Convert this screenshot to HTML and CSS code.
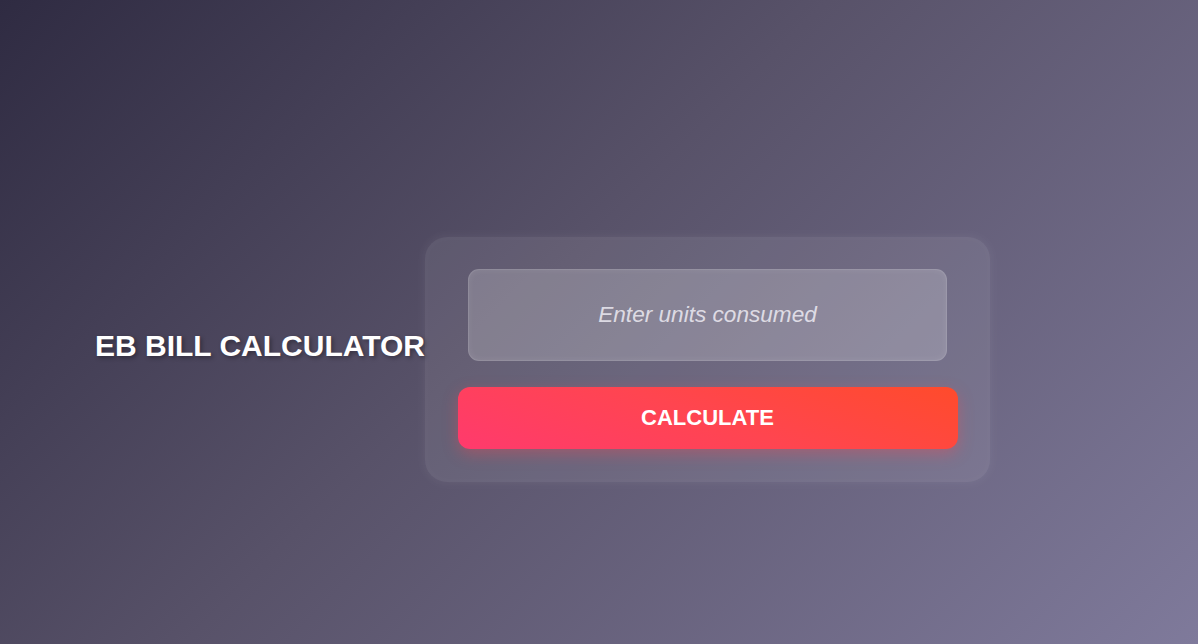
FILE: index.html
```html
<!DOCTYPE html>
<html lang="en">
<head>
<meta charset="utf-8">
<title>EB Bill Calculator</title>
<link rel="stylesheet" href="styles.css">
</head>
<body>
<main class="page">
  <h2 class="title">EB BILL CALCULATOR</h2>
  <section class="card">
    <input class="units" type="text" inputmode="numeric" placeholder="Enter units consumed">
    <button class="calc" type="button">CALCULATE</button>
  </section>
</main>
</body>
</html>
```
FILE: styles.css
```css
* { box-sizing: border-box; }
html, body { margin: 0; height: 100%; }
body {
  font-family: "Liberation Sans", Arial, sans-serif;
  background: linear-gradient(135deg, #2f2b42 0%, #585269 45%, #7f7a9b 100%);
  overflow: hidden;
}
.page {
  height: 644px;
  display: flex;
  align-items: center;
  padding: 75px 0 0 95px;
}
.title {
  margin: 0 0 28px 0;
  font-size: 30px;
  line-height: 34px;
  font-weight: bold;
  color: #ffffff;
  text-shadow: 2px 2px 4px rgba(0, 0, 0, 0.35);
}
.card {
  width: 565px;
  padding: 32px 32px 33px;
  border-radius: 22px;
  background: rgba(255, 255, 255, 0.08);
  box-shadow: 0 0 10px 2px rgba(255, 255, 255, 0.05), inset 0 0 10px rgba(255, 255, 255, 0.03);
  display: flex;
  flex-direction: column;
  align-items: center;
}
.units {
  width: 479px;
  height: 92px;
  padding: 0;
  border-radius: 11px;
  border: 1px solid rgba(255, 255, 255, 0.12);
  background: rgba(255, 255, 255, 0.2);
  box-shadow: inset 0 0 6px rgba(255, 255, 255, 0.08);
  font-family: "Liberation Sans", Arial, sans-serif;
  font-size: 22.6px;
  text-align: center;
  color: #fff;
  outline: none;
  margin: 0 0 26px 0;
}
.units::placeholder {
  color: rgba(245, 243, 250, 0.8);
  font-style: italic;
}
.calc {
  width: 500px;
  height: 62px;
  border: none;
  border-radius: 12px;
  background: linear-gradient(20deg, #ff3a6d 0%, #ff4550 50%, #ff4b2b 100%);
  box-shadow: 0 5px 15px rgba(255, 70, 80, 0.35);
  color: #fff;
  font-family: "Liberation Sans", Arial, sans-serif;
  font-size: 22px;
  font-weight: bold;
  cursor: pointer;
}
```
